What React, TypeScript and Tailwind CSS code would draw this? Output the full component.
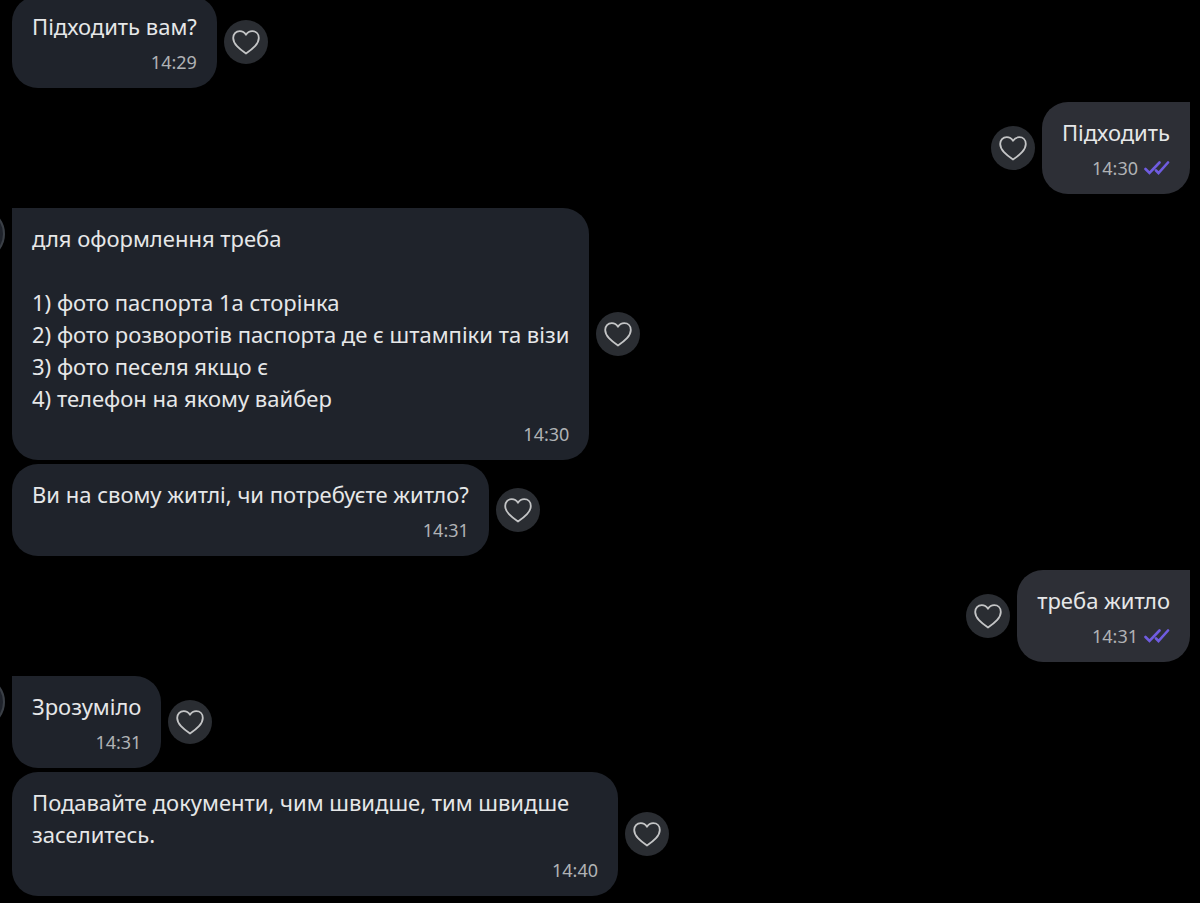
import React from 'react';

interface Message {
  id: number;
  text: string;
  time: string;
  own?: boolean;
  first?: boolean;
  wide?: boolean;
}

const messages: Message[] = [
  { id: 1, text: 'Підходить вам?', time: '14:29' },
  { id: 2, text: 'Підходить', time: '14:30', own: true, first: true },
  {
    id: 3,
    text: 'для оформлення треба\n\n1) фото паспорта 1а сторінка\n2) фото розворотів паспорта де є штампіки та візи\n3) фото песеля якщо є\n4) телефон на якому вайбер',
    time: '14:30',
    first: true,
  },
  { id: 4, text: 'Ви на свому житлі, чи потребуєте житло?', time: '14:31' },
  { id: 5, text: 'треба житло', time: '14:31', own: true, first: true },
  { id: 6, text: 'Зрозуміло', time: '14:31', first: true },
  { id: 7, text: 'Подавайте документи, чим швидше, тим швидше заселитесь.', time: '14:40', wide: true },
];

function HeartIcon() {
  return (
    <svg
      viewBox="0 0 28 25"
      className="w-7 h-[25px]"
      fill="none"
      stroke="#c4c5c6"
      strokeWidth="1.8"
      strokeLinejoin="round"
      aria-hidden="true"
    >
      <path d="M14 4.800C12.400 2.300 10.200 1.200 7.800 1.200 3.800 1.200 1.200 4.200 1.200 8c0 3 1.500 5.700 3.800 8.200 2.500 2.700 5.500 5 9 7.300 3.500-2.300 6.500-4.600 9-7.300 2.300-2.500 3.800-5.200 3.800-8.200 0-3.800-2.600-6.800-6.600-6.800-2.400 0-4.600 1.100-6.200 3.600Z" />
    </svg>
  );
}

function SeenIcon() {
  return (
    <svg
      viewBox="0 0 26 14"
      className="w-[26px] h-3.5"
      fill="none"
      stroke="#6f5ce0"
      strokeWidth="2.6"
      strokeLinecap="round"
      aria-hidden="true"
    >
      <path d="M1.500 8l4 4L15.500 1.500M12 9.500l2.500 2.500L24 1.500" />
    </svg>
  );
}

function MessageRow({ message }: { message: Message }) {
  const { text, time, own, first, wide } = message;
  const side = own ? 'flex-row-reverse' : 'flex-row';
  const color = own ? 'bg-[#2d2f36]' : 'bg-[#1f232b]';
  const corner = first ? (own ? 'rounded-tr-none' : 'rounded-tl-none') : '';

  return (
    <li className={`relative flex items-center gap-[7px] ${side} ${first ? 'mt-3.5' : 'mt-1'}`}>
      {/* sender avatar, mostly scrolled off to the left */}
      {first && !own && (
        <span className="absolute -left-[59px] top-0 w-13 h-13 rounded-full border-2 border-[#3a3f46] bg-[#1f232b]" />
      )}
      <div className={`rounded-[26px] px-5 py-3.5 ${color} ${corner} ${wide ? 'w-full max-w-[606px]' : ''}`}>
        <p className="whitespace-pre-line text-[22px] leading-8 text-[#e6e7e8]">{text}</p>
        <div className="mt-2 flex items-center justify-end gap-1.5 text-lg leading-6 text-[#b0b2b5]">
          <time>{time}</time>
          {own && <SeenIcon />}
        </div>
      </div>
      <button
        type="button"
        aria-label="Вподобати"
        className="flex w-11 h-11 shrink-0 items-center justify-center rounded-full bg-[#2a2d32]"
      >
        <HeartIcon />
      </button>
    </li>
  );
}

export default function App() {
  return (
    <main className="flex h-screen flex-col justify-end overflow-hidden bg-black pb-[7px] pl-3 pr-2.5 font-['Noto_Sans',sans-serif]">
      <ul className="shrink-0">
        {messages.map((message) => (
          <MessageRow key={message.id} message={message} />
        ))}
      </ul>
    </main>
  );
}
